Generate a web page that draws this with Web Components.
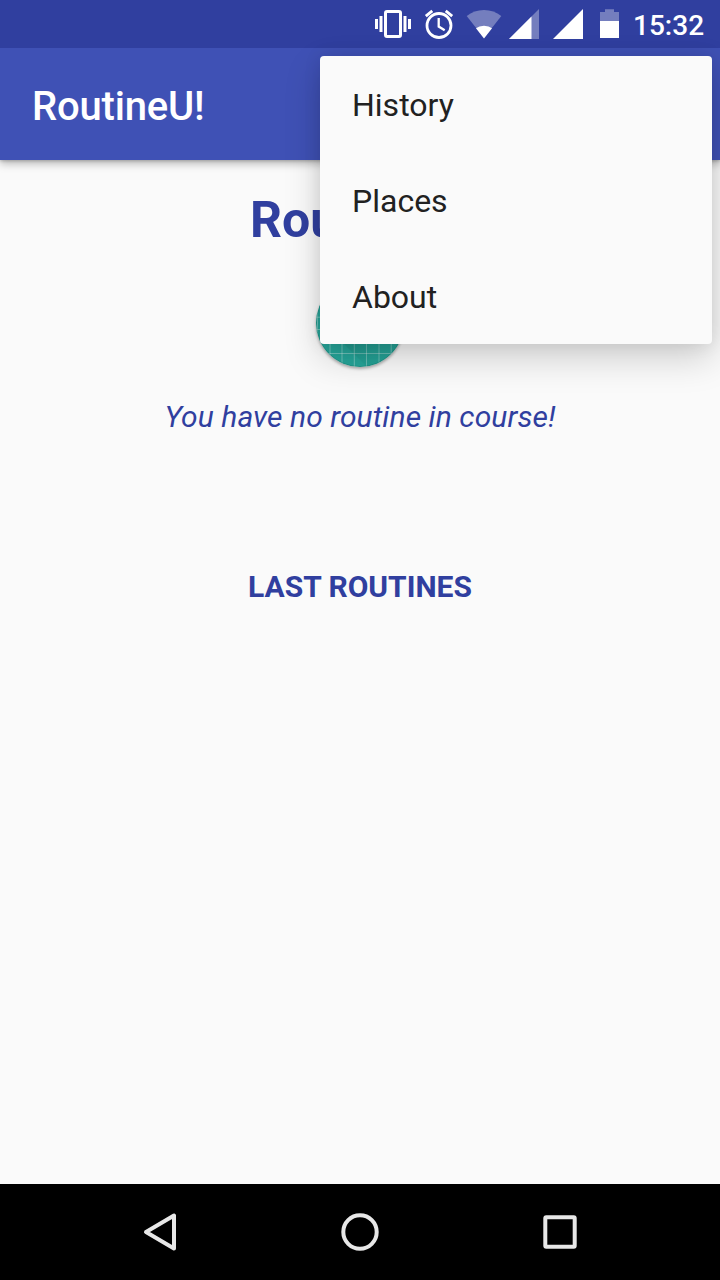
<!DOCTYPE html>
<html lang="en">
<head>
<meta charset="utf-8">
<title>RoutineU!</title>
<style>
html,body{margin:0;height:100%;background:#fafafa}
body{font-family:Roboto,"Noto Sans",sans-serif}
</style>
</head>
<body>
<routine-app></routine-app>
<script>
function define(name, html) {
  const tpl = document.createElement('template');
  tpl.innerHTML = html;
  customElements.define(name, class extends HTMLElement {
    constructor() {
      super();
      this.attachShadow({ mode: 'open' }).append(tpl.content.cloneNode(true));
    }
  });
}

define('status-bar', `
<style>
:host{display:flex;height:48px;background:#303f9f;color:#fff;box-sizing:border-box;padding-right:16px;justify-content:flex-end;align-items:center}
svg{display:block;height:48px;flex:none}
.time{font-size:28px;font-weight:500;line-height:48px;width:71px;margin-left:13px;padding-top:2px;box-sizing:border-box;height:48px;white-space:nowrap}
</style>
<svg width="250" height="48" viewBox="370 0 250 48">
  <g fill="#fff">
    <path d="M375 19h3v10h-3zM379.500 16h3v16h-3zM403.500 16h3v16h-3zM408 19h3v10h-3z"/>
  </g>
  <rect x="385.500" y="11.500" width="15" height="25" rx="1.500" fill="none" stroke="#fff" stroke-width="3"/>
  <circle cx="439" cy="25.500" r="12" fill="none" stroke="#fff" stroke-width="2.800"/>
  <path d="M438.700 18v8.500l6 3.700" fill="none" stroke="#fff" stroke-width="2.300"/>
  <path d="M425.800 16.200l6.500-5.400M452.200 16.200l-6.500-5.400" stroke="#fff" stroke-width="2.800"/>
  <path d="M484 38L466.700 16Q474 10 484 10T501.300 16Z" fill="#fff" opacity=".33"/>
  <path d="M484 38.500L476 28.200Q479 25.700 484 25.700T492 28.200Z" fill="#fff"/>
  <path d="M509 39L539 9V39Z" fill="#fff" opacity=".33"/>
  <path d="M509 39L531.500 16.500V39Z" fill="#fff"/>
  <path d="M553 39L583 9V39Z" fill="#fff"/>
  <path d="M600 21V12h5V9.300h9V12h5v9z" fill="#fff" opacity=".33"/>
  <path d="M600 21h19v17h-19z" fill="#fff"/>
</svg>
<div class="time">15:32</div>`);

define('app-bar', `
<style>
:host{display:flex;height:112px;box-sizing:border-box;padding:4px 32px 0;align-items:center;background:#3f51b5;color:#fff;font-size:40px;font-weight:500;letter-spacing:-.2px;box-shadow:0 4px 8px rgba(0,0,0,.25),0 1px 3px rgba(0,0,0,.2);clip-path:inset(0 0 -20px 0)}
</style><slot></slot>`);

define('routine-button', `
<style>
:host{display:block;width:88px;height:88px;border-radius:50%;box-shadow:0 2px 3px rgba(0,0,0,.3)}
svg{display:block}
</style>
<svg width="88" height="88" viewBox="0 0 88 88">
  <defs>
    <clipPath id="c"><circle cx="44" cy="44" r="44"/></clipPath>
    <linearGradient id="s" x1="0" y1="0" x2="1" y2="1"><stop offset="0" stop-color="#004d40" stop-opacity=".18"/><stop offset="1" stop-color="#004d40" stop-opacity="0"/></linearGradient>
  </defs>
  <g clip-path="url(#c)">
    <path d="M0 0h88v88H0z" fill="#26a69a"/>
    <path d="M1.500 0v88M14 0v88M26 0v88M38.300 0v88M50.500 0v88M63 0v88M75.200 0v88M0 13.500h88M0 26h88M0 38.200h88M0 50.500h88M0 62.500h88M0 74.500h88" stroke="#fff" stroke-opacity=".33"/>
    <path d="M26 63L62 25l26 26v37H51z" fill="url(#s)"/>
    <circle cx="44" cy="44" r="43.600" fill="none" stroke="#1c7d70" stroke-opacity=".5" stroke-width=".8"/>
  </g>
</svg>`);

define('home-content', `
<style>
:host{display:flex;flex:1;flex-direction:column;align-items:center;color:#303f9f}
h1,h2,p{margin:0;white-space:nowrap}
h1{font-size:50px;line-height:60px;margin-top:30px;font-weight:700}
routine-button{margin-top:29px}
p{font-size:30px;line-height:36px;margin-top:32px;font-style:italic;letter-spacing:.08px}
h2{font-size:30px;line-height:36px;margin-top:134px;font-weight:700}
</style>
<h1>RoutineU!</h1>
<routine-button></routine-button>
<p>You have no routine in course!</p>
<h2>LAST ROUTINES</h2>`);

define('menu-item', `
<style>
:host{display:flex;align-items:center;height:96px;padding:2px 32px 0;box-sizing:border-box;font-size:32px;color:#212121}
</style><slot></slot>`);

define('overflow-menu', `
<style>
:host{display:block;position:absolute;top:56px;right:8px;width:392px;background:#fafafa;border-radius:4px;box-shadow:0 14px 36px rgba(0,0,0,.18),0 0 18px rgba(0,0,0,.09)}
</style><slot></slot>`);

define('nav-bar', `
<style>
:host{display:flex;height:96px;background:#000;justify-content:center;gap:152px;align-items:center}
svg{display:block;fill:none;stroke:#e8e8e8;stroke-width:4;stroke-linejoin:round}
</style>
<svg width="48" height="48"><path d="M10 24L38 7.500V40.500Z"/></svg>
<svg width="48" height="48"><circle cx="24" cy="24" r="16.700"/></svg>
<svg width="48" height="48"><rect x="9.300" y="9.300" width="29.400" height="29.400" rx="1"/></svg>`);

define('routine-app', `
<style>
:host{display:flex;flex-direction:column;position:relative;width:720px;height:1280px;overflow:hidden;background:#fafafa}
</style>
<status-bar></status-bar>
<app-bar>RoutineU!</app-bar>
<home-content></home-content>
<nav-bar></nav-bar>
<overflow-menu>
  <menu-item>History</menu-item>
  <menu-item>Places</menu-item>
  <menu-item>About</menu-item>
</overflow-menu>`);
</script>
</body>
</html>
